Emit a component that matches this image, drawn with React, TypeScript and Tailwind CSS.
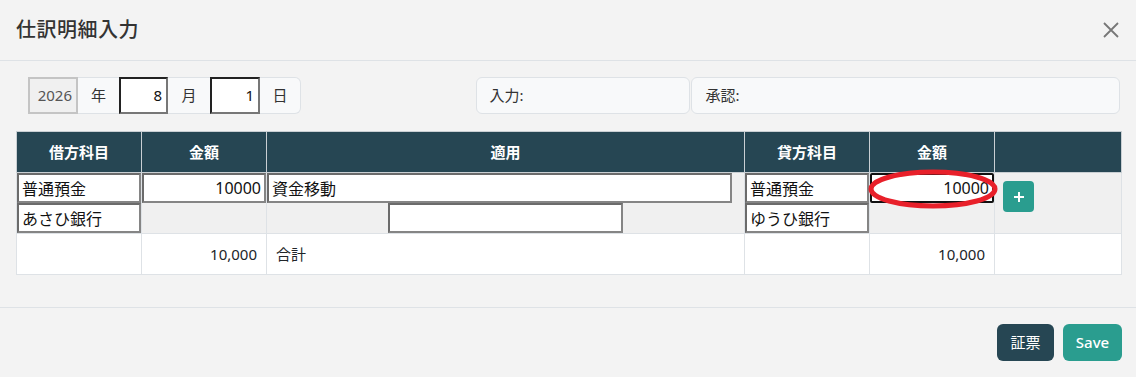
import React from "react";

const font = { fontFamily: '"Noto Sans","Noto Sans CJK JP",sans-serif' };

function Inp({ value, right = false, dark = false, className = "" }: { value: string; right?: boolean; dark?: boolean; className?: string }) {
  return (
    <input
      readOnly
      value={value}
      className={
        "block h-[30px] bg-white px-[3px] text-[16px] text-[#111] outline-none " +
        (right ? "text-right " : "") +
        (dark
          ? "border-2 border-[#111] rounded-[2px] "
          : "border-2 border-t-[#6b6b6b] border-l-[#6b6b6b] border-b-[#858585] border-r-[#858585] ") +
        className
      }
    />
  );
}

export default function App() {
  return (
    <div className="w-[1136px] h-[377px] bg-[#f3f3f3] text-[#212529] overflow-hidden" style={font}>
      {/* header */}
      <div className="h-[61px] border-b border-[#dee2e6] flex items-center justify-between pl-4 pr-[14px]">
        <h1 className="text-[20px] font-medium text-[#333] tracking-[0.5px]">仕訳明細入力</h1>
        <svg width="18" height="18" viewBox="0 0 18 18" className="mr-[2px]">
          <path d="M2 2 L16 16 M16 2 L2 16" stroke="#777" strokeWidth="1.8" />
        </svg>
      </div>

      {/* body */}
      <div className="px-4 pt-4 pb-[32px] border-b border-[#dee2e6]">
        <div className="flex h-[37px]">
          <div className="w-[460px] pl-3">
            <div className="flex h-[37px] text-[15px]">
              <div className="w-[50px] flex items-center justify-end pr-[4px] bg-[#f0f0f0] border-2 border-[#c4c4c4] text-[#555]">2026</div>
              <div className="w-[41px] flex items-center justify-center bg-[#f8f9fa] border-y border-[#dee2e6] text-[#333]">年</div>
              <div className="w-[49px] flex items-center justify-end pr-[4px] bg-white border-2 border-t-[#222] border-l-[#222] border-b-[#777] border-r-[#777] text-[#111]">8</div>
              <div className="w-[42px] flex items-center justify-center bg-[#f8f9fa] border-y border-[#dee2e6] text-[#333]">月</div>
              <div className="w-[50px] flex items-center justify-end pr-[4px] bg-white border-2 border-t-[#222] border-l-[#222] border-b-[#777] border-r-[#777] text-[#111]">1</div>
              <div className="w-[41px] flex items-center justify-center bg-[#f8f9fa] border border-l-0 border-[#dee2e6] rounded-r-[6px] text-[#333]">日</div>
            </div>
          </div>
          <div className="w-[215px] h-[37px] flex items-center px-[13px] bg-[#f8f9fa] border border-[#dee2e6] rounded-[6px] text-[15px] text-[#333]">入力:</div>
          <div className="ml-[1px] w-[429px] h-[37px] flex items-center px-[13px] bg-[#f8f9fa] border border-[#dee2e6] rounded-[6px] text-[15px] text-[#333]">承認:</div>
        </div>

        <table className="mt-[17px] w-[1105px] table-fixed border-collapse border border-[#dee2e6] text-[15px]">
          <colgroup>
            <col className="w-[125px]" />
            <col className="w-[125px]" />
            <col className="w-[478px]" />
            <col className="w-[125px]" />
            <col className="w-[125px]" />
            <col className="w-[127px]" />
          </colgroup>
          <thead>
            <tr className="h-[41px] bg-[#264653] text-white font-bold">
              <th className="border border-[#c9cfd3]">借方科目</th>
              <th className="border border-[#c9cfd3]">金額</th>
              <th className="border border-[#c9cfd3]">適用</th>
              <th className="border border-[#c9cfd3]">貸方科目</th>
              <th className="border border-[#c9cfd3]">金額</th>
              <th className="border border-[#c9cfd3]"></th>
            </tr>
          </thead>
          <tbody>
            <tr className="h-[60px] bg-[#f0f0f0] align-top">
              <td className="p-0 border border-[#dee2e6]">
                <Inp value="普通預金" className="w-[124px]" />
                <Inp value="あさひ銀行" className="w-[124px]" />
              </td>
              <td className="p-0 border border-[#dee2e6]">
                <Inp value="10000" right className="w-[124px]" />
              </td>
              <td className="p-0 border border-[#dee2e6]">
                <Inp value="資金移動" className="w-[465px]" />
                <Inp value="" className="w-[235px] mx-auto" />
              </td>
              <td className="p-0 border border-[#dee2e6]">
                <Inp value="普通預金" className="w-[124px]" />
                <Inp value="ゆうひ銀行" className="w-[124px]" />
              </td>
              <td className="p-0 border border-[#dee2e6] relative">
                <Inp value="10000" right dark className="w-[124px]" />
                <svg className="absolute left-[-3px] top-[-4px] pointer-events-none" width="134" height="42" viewBox="0 0 134 42">
                  <ellipse cx="66" cy="20" rx="62" ry="17" fill="none" stroke="#e8202a" strokeWidth="5" />
                </svg>
              </td>
              <td className="p-0 border border-[#dee2e6]">
                <div className="ml-[8px] mt-[8px] w-[31px] h-[31px] rounded-[4px] bg-[#2a9d8f] flex items-center justify-center">
                  <svg width="12" height="12" viewBox="0 0 12 12">
                    <path d="M6 1 V11 M1 6 H11" stroke="white" strokeWidth="2" />
                  </svg>
                </div>
              </td>
            </tr>
            <tr className="h-[41px] bg-white">
              <td className="border border-[#dee2e6]"></td>
              <td className="border border-[#dee2e6] text-right pr-[9px]">10,000</td>
              <td className="border border-[#dee2e6] pl-[9px]">合計</td>
              <td className="border border-[#dee2e6]"></td>
              <td className="border border-[#dee2e6] text-right pr-[9px]">10,000</td>
              <td className="border border-[#dee2e6]"></td>
            </tr>
          </tbody>
        </table>
      </div>

      {/* footer */}
      <div className="flex justify-end gap-[9px] pt-4 pr-[14px]">
        <button className="h-[37px] w-[57px] rounded-[6px] bg-[#264653] text-white text-[15px]">証票</button>
        <button className="h-[37px] w-[59px] rounded-[6px] bg-[#2a9d8f] text-white text-[15px] font-medium">Save</button>
      </div>
    </div>
  );
}
